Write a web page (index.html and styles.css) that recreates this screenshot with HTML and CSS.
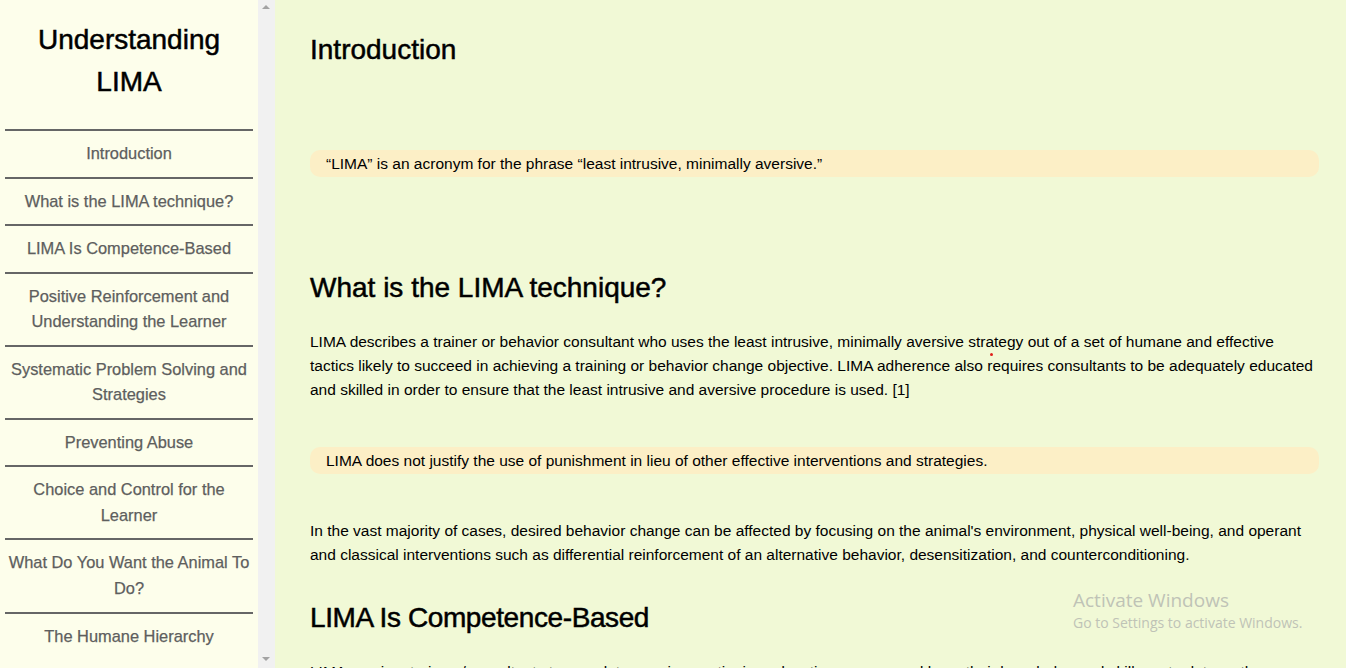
FILE: index.html
```html
<!DOCTYPE html>
<html lang="en">
<head>
<meta charset="utf-8">
<title>Understanding LIMA</title>
<link rel="stylesheet" href="styles.css">
</head>
<body>
<div class="layout">
  <aside class="sidebar">
    <div class="sidebar-inner">
      <h1 class="site-title">Understanding LIMA</h1>
      <nav class="toc">
        <a class="toc-item" href="#intro">Introduction</a>
        <a class="toc-item" href="#what">What is the LIMA technique?</a>
        <a class="toc-item" href="#competence">LIMA Is Competence-Based</a>
        <a class="toc-item" href="#positive">Positive Reinforcement and Understanding the Learner</a>
        <a class="toc-item" href="#systematic">Systematic Problem Solving and Strategies</a>
        <a class="toc-item" href="#abuse">Preventing Abuse</a>
        <a class="toc-item" href="#choice">Choice and Control for the Learner</a>
        <a class="toc-item" href="#want">What Do You Want the Animal To Do?</a>
        <a class="toc-item" href="#hierarchy">The Humane Hierarchy</a>
      </nav>
    </div>
    <div class="scrollbar">
      <span class="arrow arrow-up"></span>
      <span class="arrow arrow-down"></span>
    </div>
  </aside>
  <main class="content">
    <section class="section" id="intro">
      <h2 class="section-title">Introduction</h2>
      <p class="callout callout-first">“LIMA” is an acronym for the phrase “least intrusive, minimally aversive.”</p>
    </section>
    <section class="section" id="what">
      <h2 class="section-title section-title-spaced">What is the LIMA technique?</h2>
      <p class="text">LIMA describes a trainer or behavior consultant who uses the least intrusive, minimally aversive strategy out of a set of humane and effective tactics likely to succeed in achieving a training or behavior change objective. LIMA adherence also requires consultants to be adequately educated and skilled in order to ensure that the least intrusive and aversive procedure is used. [1]</p>
      <p class="callout">LIMA does not justify the use of punishment in lieu of other effective interventions and strategies.</p>
      <p class="text">In the vast majority of cases, desired behavior change can be affected by focusing on the animal's environment, physical well-being, and operant and classical interventions such as differential reinforcement of an alternative behavior, desensitization, and counterconditioning.</p>
    </section>
    <section class="section" id="competence">
      <h2 class="section-title section-title-after-text">LIMA Is Competence-Based</h2>
      <p class="text">LIMA requires trainers/consultants to complete ongoing continuing education courses and keep their knowledge and skills up to date so they can recognize and apply the most humane and effective strategies available to them.</p>
    </section>
  </main>
</div>
<span class="red-dot"></span>
<div class="watermark">
  <div class="watermark-title">Activate Windows</div>
  <div class="watermark-sub">Go to Settings to activate Windows.</div>
</div>
</body>
</html>
```
FILE: styles.css
```css
html, body {
  margin: 0;
  padding: 0;
  height: 100%;
  overflow: hidden;
}

body {
  font-family: "Liberation Sans", Arial, sans-serif;
  color: #000;
  background: #f1f9d6;
}

.layout {
  display: flex;
  height: 100vh;
}

.sidebar {
  display: flex;
  flex: 0 0 275px;
  background: #fdfeeb;
}

.sidebar-inner {
  width: 258px;
  overflow: hidden;
}

.site-title {
  margin: 19px 10px 26px;
  font-size: 28px;
  line-height: 42px;
  font-weight: normal;
  text-align: center;
  color: #000;
  -webkit-text-stroke: 0.5px #000;
}

.toc {
  display: flex;
  flex-direction: column;
  margin: 0 5px;
}

.toc-item {
  display: block;
  border-top: 2px solid #666;
  padding: 10px 0;
  font-size: 16.4px;
  line-height: 25.55px;
  text-align: center;
  color: #5e5e5e;
  text-decoration: none;
  -webkit-text-stroke: 0.25px #5e5e5e;
}

.scrollbar {
  position: relative;
  width: 17px;
  background: #f1f1f1;
}

.arrow {
  position: absolute;
  left: 4px;
  width: 0;
  height: 0;
  border-left: 4px solid transparent;
  border-right: 4px solid transparent;
}

.arrow-up {
  top: 5px;
  border-bottom: 4px solid #a3a3a3;
}

.arrow-down {
  bottom: 7px;
  border-top: 4px solid #a3a3a3;
}

.content {
  flex: 1;
  padding: 33px 27px 0 35px;
  overflow: hidden;
}

.section {
  margin: 0;
}

.section-title {
  margin: 0;
  font-size: 28px;
  line-height: 34px;
  font-weight: normal;
  -webkit-text-stroke: 0.5px #000;
}

.section-title-spaced {
  margin-top: 94px;
}

.section-title-after-text {
  margin-top: 34px;
  letter-spacing: -0.4px;
}

.callout {
  margin: 45px 0;
  padding: 4px 16px;
  font-size: 15.5px;
  line-height: 19px;
  background: #fcefc6;
  border-radius: 10px;
}

.callout-first {
  margin: 83px 0 0;
}

.text {
  margin: 26px 0 0;
  font-size: 15.5px;
  line-height: 24px;
}

.callout + .text {
  margin-top: 45px;
}

.section-title + .text {
  margin-top: 25px;
}

.red-dot {
  position: absolute;
  left: 990px;
  top: 353px;
  width: 3px;
  height: 3px;
  border-radius: 50%;
  background: #e0201c;
}

.watermark {
  position: absolute;
  left: 1073px;
  top: 588px;
  font-family: "Open Sans", "Noto Sans", sans-serif;
  color: #bfc3b6;
}

.watermark-title {
  font-size: 19px;
  line-height: 25px;
}

.watermark-sub {
  font-size: 14px;
  line-height: 20px;
}
```
